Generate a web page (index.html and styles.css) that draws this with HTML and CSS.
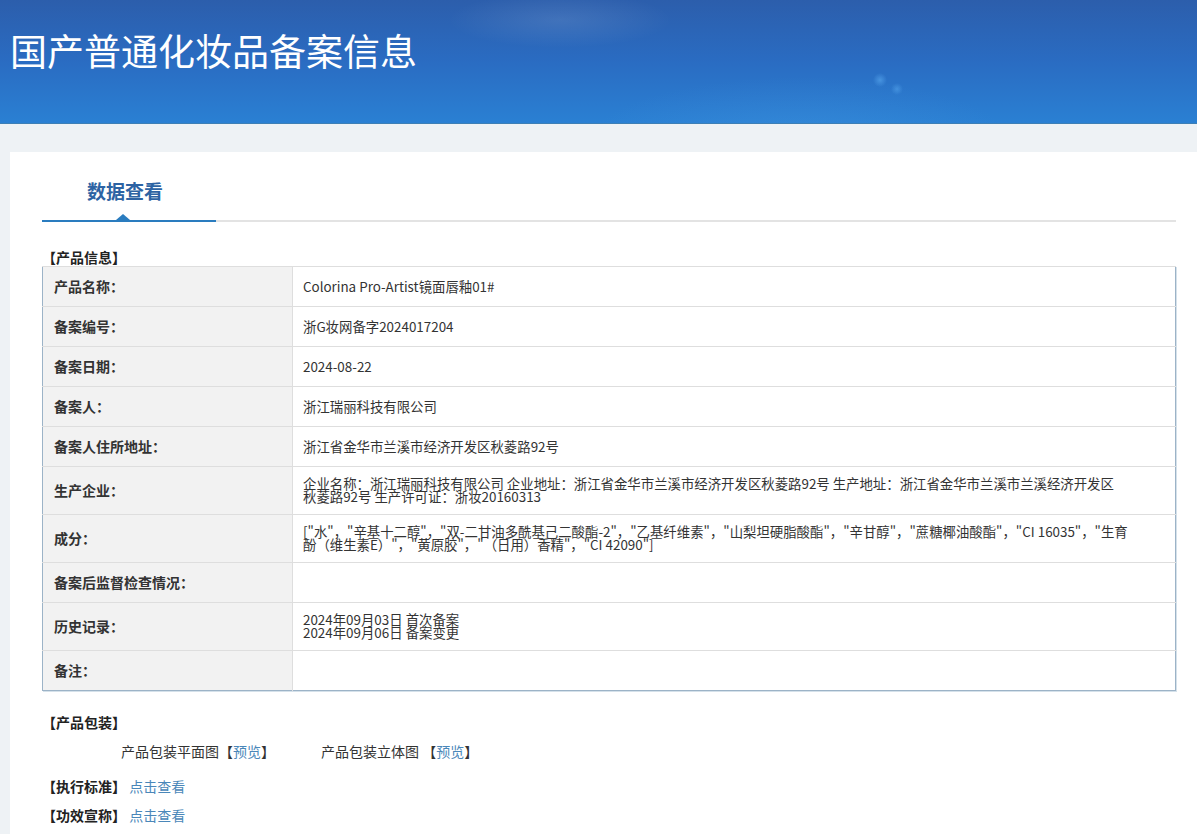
FILE: index.html
```html
<!DOCTYPE html>
<html lang="zh-CN">
<head>
<meta charset="utf-8">
<title>国产普通化妆品备案信息</title>
<link rel="stylesheet" href="styles.css">
</head>
<body>
<header class="banner">
  <h1 class="banner-title">国产普通化妆品备案信息</h1>
</header>
<main class="page">
  <section class="card">
    <div class="tabs">
      <div class="tab active">数据查看</div>
    </div>
    <h2 class="sec-title">【产品信息】</h2>
    <table class="info">
      <tr><th>产品名称：</th><td>Colorina Pro-Artist镜面唇釉01#</td></tr>
      <tr><th>备案编号：</th><td>浙G妆网备字2024017204</td></tr>
      <tr><th>备案日期：</th><td>2024-08-22</td></tr>
      <tr><th>备案人：</th><td>浙江瑞丽科技有限公司</td></tr>
      <tr><th>备案人住所地址：</th><td>浙江省金华市兰溪市经济开发区秋菱路92号</td></tr>
      <tr><th>生产企业：</th><td>企业名称：浙江瑞丽科技有限公司 企业地址：浙江省金华市兰溪市经济开发区秋菱路92号 生产地址：浙江省金华市兰溪市兰溪经济开发区秋菱路92号 生产许可证：浙妆20160313</td></tr>
      <tr><th>成分：</th><td class="wide">["水"，"辛基十二醇"，"双-二甘油多酰基己二酸酯-2"，"乙基纤维素"，"山梨坦硬脂酸酯"，"辛甘醇"，"蔗糖椰油酸酯"，"CI 16035"，"生育酚（维生素E）"，"黄原胶"，"（日用）香精"，"CI 42090"]</td></tr>
      <tr><th>备案后监督检查情况：</th><td></td></tr>
      <tr><th>历史记录：</th><td>2024年09月03日 首次备案<br>2024年09月06日 备案变更</td></tr>
      <tr><th>备注：</th><td></td></tr>
    </table>
    <h2 class="sec-title sec-gap">【产品包装】</h2>
    <div class="pack-row">
      <span class="pack-item">产品包装平面图【<a class="link" href="#">预览</a>】</span>
      <span class="pack-item">产品包装立体图 【<a class="link" href="#">预览</a>】</span>
    </div>
    <div class="line-item first"><span class="strong">【执行标准】</span> <a class="link" href="#">点击查看</a></div>
    <div class="line-item"><span class="strong">【功效宣称】</span> <a class="link" href="#">点击查看</a></div>
  </section>
</main>
</body>
</html>
```
FILE: styles.css
```css
html, body {
  margin: 0;
  padding: 0;
}
body {
  background: #eef2f5;
  font-family: "Noto Sans CJK SC", "Noto Sans", sans-serif;
  color: #333;
  height: 834px;
  overflow: hidden;
}
.banner {
  height: 123px;
  border-bottom: 1px solid #3d7fb5;
  background:
    radial-gradient(ellipse 160px 40px at 560px 20px, rgba(255,255,255,0.10), rgba(255,255,255,0) 70%),
    radial-gradient(circle 7px at 880px 80px, rgba(90,170,240,0.6), rgba(90,170,240,0) 100%),
    radial-gradient(circle 6px at 897px 89px, rgba(90,170,240,0.5), rgba(90,170,240,0) 100%),
    radial-gradient(ellipse 300px 90px at 800px 140px, rgba(80,160,230,0.25), rgba(80,160,230,0) 70%),
    linear-gradient(180deg, #2c5eac 0%, #2a6cc2 50%, #2a80d3 100%);
  padding: 0 0 0 10px;
  box-sizing: content-box;
}
.banner-title {
  margin: 0;
  padding-top: 27px;
  font-size: 37px;
  line-height: 46px;
  font-weight: 400;
  color: #fff;
}
.page {
  padding: 28px 0 0 10px;
}
.card {
  background: #fff;
  padding: 24px 21px 40px 32px;
  min-height: 700px;
}
.tabs {
  display: flex;
  border-bottom: 2px solid #e3e3e3;
}
.tab {
  position: relative;
  width: 174px;
  text-align: center;
  font-size: 19px;
  line-height: 30px;
  font-weight: 700;
  color: #2d63a3;
  padding-bottom: 14px;
  margin-bottom: -2px;
  padding-right: 8px;
  box-sizing: border-box;
}
.tab.active {
  border-bottom: 2px solid #2a7cbf;
}
.tab.active::after {
  content: "";
  position: absolute;
  left: 74px;
  bottom: 0;
  border-left: 7px solid transparent;
  border-right: 7px solid transparent;
  border-bottom: 6px solid #2a7cbf;
}
.sec-title {
  margin: 26px 0 0;
  font-size: 14px;
  line-height: 18px;
  font-weight: 700;
  color: #222;
}
.sec-gap {
  margin-top: 22px;
}
.info {
  width: 100%;
  border-collapse: collapse;
  border: 1px solid #9cb3c7;
  box-shadow: 1px 1px 0 #d5e1ea;
}
.info th, .info td {
  border-top: 1px solid #dedede;
  height: 18px;
  padding: 10px 10px 11px;
  vertical-align: middle;
  font-size: 13.4px;
  line-height: 13px;
}
.info th {
  width: 228px;
  background: #f2f2f2;
  text-align: left;
  padding-left: 11px;
  font-size: 14px;
  font-weight: 700;
  color: #333;
  border-right: 1px solid #dedede;
}
.info td {
  color: #333;
  padding-right: 50px;
}
.info td.wide {
  padding-right: 42px;
}
.pack-row {
  display: flex;
  padding-left: 79px;
  margin-top: 11px;
  font-size: 14px;
  line-height: 18px;
}
.pack-item {
  width: 200px;
}
.line-item {
  margin-top: 11px;
  font-size: 14px;
  line-height: 18px;
}
.line-item.first {
  margin-top: 17px;
}
.strong {
  font-size: 14px;
  font-weight: 700;
  color: #222;
}
.link {
  color: #4a87b9;
  text-decoration: none;
}
```
